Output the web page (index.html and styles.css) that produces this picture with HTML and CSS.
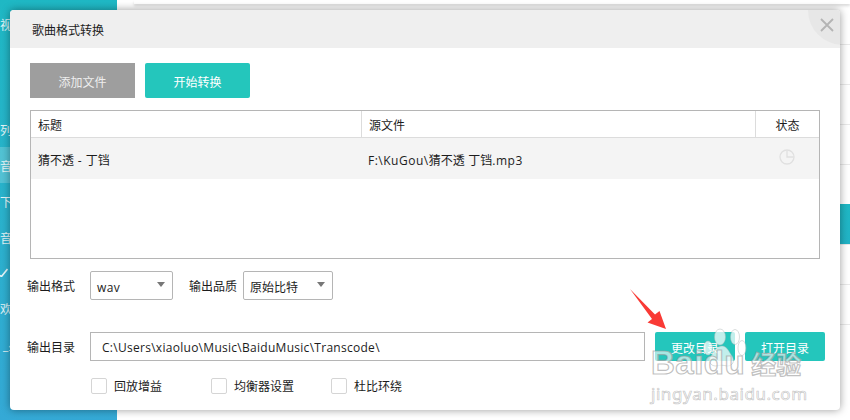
FILE: index.html
```html
<!DOCTYPE html>
<html lang="zh-CN">
<head>
<meta charset="utf-8">
<title>歌曲格式转换</title>
<link rel="stylesheet" href="styles.css">
</head>
<body>
<div class="app">
  <aside class="sidebar">
    <span class="nav n1">视</span>
    <span class="nav n2">列</span>
    <span class="nav n3 active">音</span>
    <span class="nav n4">下</span>
    <span class="nav n5">音</span>
    <svg class="tick" width="8" height="10" viewBox="0 0 8 10"><path d="M0 8.500L1.500 9.500L7.500 2"/></svg>
    <span class="nav n7">欢</span>
    <span class="nav n8">_星</span>
  </aside>
  <main class="content">
    <div class="topbar"></div>
    <div class="row"></div><div class="row"></div><div class="row"></div><div class="row"></div>
    <div class="row tealrow"></div>
    <div class="row"></div><div class="row"></div><div class="row"></div>
  </main>
</div>

<section class="dialog">
  <header class="dialog-head">
    <h1 class="dialog-title">歌曲格式转换</h1>
    <div class="close">
      <svg class="close-icon" width="14" height="14" viewBox="0 0 14 14"><path d="M1 1l12 12M13 1L1 13"/></svg>
    </div>
  </header>
  <div class="dialog-body">
    <div class="actions">
      <button class="btn btn-gray">添加文件</button>
      <button class="btn btn-teal">开始转换</button>
    </div>
    <div class="table">
      <div class="thead">
        <div class="c1">标题</div>
        <div class="c2">源文件</div>
        <div class="c3">状态</div>
      </div>
      <div class="trow">
        <div class="c1 cell">猜不透<span class="lat"> - </span>丁铛</div>
        <div class="c2 cell"><span class="lat">F:\KuGou\</span>猜不透<span class="lat"> </span>丁铛<span class="lat">.mp3</span></div>
        <div class="c3">
          <svg class="clock" width="16" height="16" viewBox="0 0 16 16"><circle cx="8" cy="8" r="7"/><path d="M8 1.500V8h6.500"/></svg>
        </div>
      </div>
    </div>
    <div class="format-line">
      <span class="label">输出格式</span>
      <div class="select s-format">wav<i class="caret"></i></div>
      <span class="label label-q">输出品质</span>
      <div class="select s-quality">原始比特<i class="caret"></i></div>
    </div>
    <div class="dir-line">
      <span class="label">输出目录</span>
      <div class="path">C:\Users\xiaoluo\Music\BaiduMusic\Transcode\</div>
      <button class="btn btn-teal btn-small">更改目录</button>
      <button class="btn btn-teal btn-small">打开目录</button>
    </div>
    <div class="checks">
      <label class="check"><i class="box"></i><span class="check-text">回放增益</span></label>
      <label class="check"><i class="box"></i><span class="check-text">均衡器设置</span></label>
      <label class="check"><i class="box"></i><span class="check-text">杜比环绕</span></label>
    </div>
  </div>
</section>

<svg class="arrow" width="50" height="50" viewBox="0 0 50 50"><path d="M1 1L26 26.500L30.500 23L37 41L18.500 34.500L23 31Z"/></svg>

<div class="watermark">
  <svg class="paw" width="52" height="48" viewBox="0 0 52 48">
    <ellipse cx="10" cy="20" rx="4.500" ry="7"/>
    <ellipse cx="22" cy="9" rx="5.500" ry="8"/>
    <ellipse cx="37" cy="9" rx="4.500" ry="7.500"/>
    <ellipse cx="44" cy="20" rx="4" ry="7.500"/>
    <path d="M24 18c5 0 7 6 10 10 3 5 1 10-5 10-4-1-7-1-11 0-6 0-8-5-5-10 3-4 6-10 11-10z"/>
  </svg>
  <div class="wm-brand"><span class="wm-bai">Baidu</span><span class="wm-jy">经验</span></div>
  <div class="wm-url">jingyan.baidu.com</div>
</div>
</body>
</html>
```
FILE: styles.css
```css
* { box-sizing: border-box; }
html, body { margin: 0; padding: 0; }
body {
  width: 850px; height: 420px; overflow: hidden; position: relative;
  background: #fff;
  font: 12px/1.4 "Open Sans", "Noto Sans CJK SC", sans-serif;
  color: #1c1c1c;
}
.app { display: flex; width: 850px; height: 420px; }
.sidebar {
  width: 117px; height: 420px; position: relative; flex: none;
  background: linear-gradient(180deg, #1fb8c4 0%, #2ab2cc 50%, #35a9d6 100%);
}
.nav { position: absolute; left: 0; color: #e4f5f8; font-size: 12px; line-height: 16px; }
.n1 { top: 18px; } .n2 { top: 123px; }
.n3 { top: 159px; } .n4 { top: 195px; } .n5 { top: 231px; }
.n7 { top: 302px; } .n8 { top: 338px; left: 3px; }
.tick { position: absolute; left: 0; top: 267px; }
.tick path { fill: none; stroke: #e4f5f8; stroke-width: 1.6; }
.active::before {
  content: ""; position: absolute; left: 0; top: -12px; width: 117px; height: 36px;
  background: rgba(255,255,255,.2);
}
.content { flex: 1; padding: 0 0 0 17px; position: relative; }
.topbar { height: 4px; margin-bottom: 40px; box-shadow: 0 2px 3px rgba(0,0,0,.15); }
.row { height: 40px; border-top: 1px solid #e9e9e9; }
.tealrow { background: linear-gradient(180deg,#1fb8c4,#22b3c6); border-top: 0; }

.dialog {
  position: absolute; left: 10px; top: 10px; width: 830px; height: 400px;
  background: #fff; border-radius: 4px;
  box-shadow: 0 0 8px rgba(0,0,0,.4);
  overflow: hidden;
}
.dialog-head {
  height: 38px; background: #efefef; position: relative; overflow: hidden;
  display: flex; align-items: center; padding: 4px 0 0 22px;
}
.dialog-title { margin: 0; font-size: 12px; font-weight: 400; color: #1c1c1c; }
.close {
  position: absolute; left: 798px; top: -35px; width: 70px; height: 70px;
  border-radius: 50%; background: #e7e7e7;
}
.close-icon { position: absolute; left: 12px; top: 43px; }
.close-icon path { stroke: #b4b4b4; stroke-width: 1.8; fill: none; }

.dialog-body { padding: 15px 20px 0; }
.actions { display: flex; gap: 10px; }
.btn {
  border: 0; width: 105px; height: 35px; padding: 3px 0 0; color: #fff;
  font: 12px "Open Sans", "Noto Sans CJK SC", sans-serif;
}
.btn-gray { background: #9e9e9e; color: #eee; }
.btn-teal { background: #24c6bc; border-radius: 2px; }
.btn-small { width: 80px; height: 29px; flex: none; padding-top: 2px; }

.table { margin-top: 12px; width: 790px; height: 149px; border: 1px solid #b5b5b5; }
.thead, .trow { display: grid; grid-template-columns: 330px 394px 1fr; align-items: center; }
.thead { height: 27px; border-bottom: 1px solid #dcdcdc; }
.thead > div { height: 26px; line-height: 30px; padding-left: 7px; }
.thead .c2, .thead .c3 { border-left: 1px solid #dcdcdc; }
.thead .c3 { text-align: center; padding-left: 0; }
.trow { height: 41px; background: #f4f4f4; }
.cell { padding: 6px 0 0 7px; }
.c2.cell { padding-left: 6px; margin-left: 1px; }
.lat { letter-spacing: .5px; }
.trow .c3 { padding: 0 0 3px 0; display: flex; justify-content: center; }
.clock circle, .clock path { fill: none; stroke: #e0e0e0; stroke-width: 1.3; }

.label { padding-top: 4px; }
.format-line { display: flex; align-items: center; margin-top: 12px; height: 29px; margin-left: -3px; }
.format-line .label { width: 63px; }
.format-line .label-q { width: 54px; margin-left: 16px; }
.select {
  height: 29px; border: 1px solid #b5b5b5; border-radius: 2px; position: relative;
  line-height: 31px; padding-left: 6px;
}
.s-format { width: 83px; letter-spacing: .4px; }
.s-quality { width: 90px; }
.caret {
  position: absolute; right: 7px; top: 10px; width: 0; height: 0;
  border-left: 4px solid transparent; border-right: 4px solid transparent; border-top: 5px solid #777;
}
.dir-line { display: flex; align-items: center; margin-top: 32px; margin-left: -3px; height: 29px; }
.dir-line .label { width: 63px; flex: none; }
.path {
  width: 555px; height: 29px; border: 1px solid #b5b5b5; flex: none;
  line-height: 29px; padding-left: 11px; margin-right: 10px; letter-spacing: .28px;
}
.dir-line .btn + .btn { margin-left: 10px; }
.checks { display: flex; margin: 17px 0 0 61px; }
.check { display: flex; align-items: center; width: 120px; height: 16px; }
.check-text { padding-top: 2px; }
.box { width: 16px; height: 16px; border: 1px solid #d5d5d5; border-radius: 2px; margin-right: 7px; background: #fff; }

.arrow { position: absolute; left: 629px; top: 288px; }
.arrow path { fill: #f93a35; }

.watermark { position: absolute; left: 650px; top: 328px; width: 170px; height: 92px; pointer-events: none; }
.paw { position: absolute; left: 48px; top: 0; }
.paw ellipse, .paw path { fill: rgba(255,255,255,.72); stroke: rgba(170,180,180,.45); stroke-width: 1; }
.wm-brand { position: absolute; left: 1px; top: 10px; white-space: nowrap; line-height: 50px; }
.wm-bai {
  font: 700 33px/50px "Liberation Sans", sans-serif; color: rgba(255,255,255,.6);
  -webkit-text-stroke: 1.2px rgba(150,150,150,.6); letter-spacing: .5px;
}
.wm-jy {
  font: 700 25px/50px "Noto Sans CJK SC", sans-serif; color: rgba(255,255,255,.6);
  -webkit-text-stroke: 1.2px rgba(150,150,150,.6); margin-left: 6px;
}
.wm-url {
  position: absolute; left: 1px; top: 55px; white-space: nowrap;
  font: 400 17px/22px "Noto Sans", sans-serif; color: rgba(255,255,255,.6);
  -webkit-text-stroke: .7px rgba(150,150,150,.55); letter-spacing: .55px;
}
```
